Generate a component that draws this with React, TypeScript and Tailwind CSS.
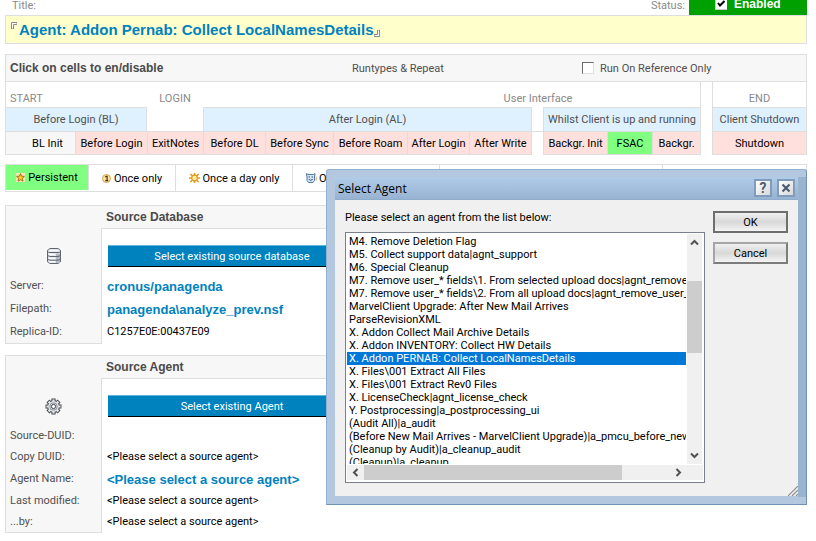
import React from "react";

const FONT = "font-['Roboto','Liberation_Sans',sans-serif]";

type Cell = { label: string; on?: boolean; plain?: boolean; end?: boolean };

const cells: (Cell | null)[] = [
  { label: "BL Init", plain: true },
  { label: "Before Login" },
  { label: "ExitNotes" },
  { label: "Before DL" },
  { label: "Before Sync" },
  { label: "Before Roam" },
  { label: "After Login" },
  { label: "After Write", end: true },
  null,
  { label: "Backgr. Init" },
  { label: "FSAC", on: true },
  { label: "Backgr.", end: true },
  null,
  { label: "Shutdown", end: true },
];

const agents = [
  "M4. Remove Deletion Flag",
  "M5. Collect support data|agnt_support",
  "M6. Special Cleanup",
  "M7. Remove user_* fields\\1. From selected upload docs|agnt_remove_user_fields_sel",
  "M7. Remove user_* fields\\2. From all upload docs|agnt_remove_user_fields_all",
  "MarvelClient Upgrade: After New Mail Arrives",
  "ParseRevisionXML",
  "X. Addon Collect Mail Archive Details",
  "X. Addon INVENTORY: Collect HW Details",
  "X. Addon PERNAB: Collect LocalNamesDetails",
  "X. Files\\001 Extract All Files",
  "X. Files\\001 Extract Rev0 Files",
  "X. LicenseCheck|agnt_license_check",
  "Y. Postprocessing|a_postprocessing_ui",
  "(Audit All)|a_audit",
  "(Before New Mail Arrives - MarvelClient Upgrade)|a_pmcu_before_new_mail",
  "(Cleanup by Audit)|a_cleanup_audit",
  "(Cleanup)|a_cleanup",
];

function StarIcon() {
  return (
    <svg width="9" height="9" viewBox="0 0 9 9" aria-hidden="true">
      <rect width="9" height="9" fill="#f6e6b4" />
      <path d="M4.5 .6 5.6 3.2 8.4 3.4 6.3 5.3 7 8.2 4.5 6.7 2 8.2 2.7 5.3 .6 3.4 3.4 3.2Z" fill="#ffcf1f" stroke="#8f5a10" strokeWidth=".8" />
    </svg>
  );
}

function CoinIcon() {
  return (
    <svg width="9" height="9" viewBox="0 0 9 9" aria-hidden="true">
      <circle cx="4.5" cy="4.5" r="4" fill="#ffe39a" stroke="#c99a4a" strokeWidth=".9" />
      <path d="M3.2 3.2 4.3 2.2H5.1V6.4M3.4 6.6H6.2" fill="none" stroke="#3a2400" strokeWidth="1.1" />
    </svg>
  );
}

function SunIcon() {
  return (
    <svg width="11" height="10" viewBox="0 0 11 10" aria-hidden="true">
      <path d="M5.5 0V10M0 5H11M1.4 1 9.6 9M9.6 1 1.4 9" stroke="#e8961c" strokeWidth="1.6" />
      <circle cx="5.5" cy="5" r="2.8" fill="#fff0a8" stroke="#e8961c" strokeWidth="1.2" />
    </svg>
  );
}

function SessionIcon() {
  return (
    <svg width="11" height="10" viewBox="0 0 11 10" aria-hidden="true">
      <path d="M.5 .5 2 1.5H7.5L9 .5V2.5H8.5V7.5L7 9.5H2.5L1 7.5V2.5H.5Z" fill="#d6e6f6" stroke="#54799e" strokeWidth="1" />
      <path d="M2.5 4H4M5.5 4H7M2.8 6C3.5 7.6 6 7.6 6.7 6" fill="none" stroke="#27507c" strokeWidth="1" />
      <path d="M10.2 3.5V7.5" stroke="#e0a060" strokeWidth="1" />
    </svg>
  );
}

function DatabaseIcon() {
  return (
    <svg width="16" height="16" viewBox="0 0 16 16" aria-hidden="true">
      <rect width="16" height="16" fill="#fff" />
      <path d="M1.5 3C1.5 1.5 3 .5 5 .5H11C13 .5 14.5 1.5 14.5 3V13C14.5 14.5 13 15.5 11 15.5H5C3 15.5 1.5 14.5 1.5 13Z" fill="#e3e7ec" stroke="#5f656d" />
      <path d="M10 5.5H14V15H10Z" fill="#b4bbc4" />
      <path d="M1.5 3.5C2 4.5 3.5 4.5 5 4.5H11C12.5 4.5 14 4.5 14.5 3.5M1.5 7C2 8.2 3.5 8.5 5 8.5H11C12.5 8.5 14 8.2 14.5 7M1.5 10.7C2 11.9 3.5 12.2 5 12.2H11C12.5 12.2 14 11.9 14.5 10.7" fill="none" stroke="#5f656d" />
      <path d="M3 6.5H9M3 10.3H9M3 13.8H9M4 2.5H12" stroke="#fff" />
    </svg>
  );
}

function GearIcon() {
  return (
    <svg width="17" height="17" viewBox="0 0 17 17" aria-hidden="true">
      <g stroke="#4a4e54" strokeWidth="4.2">
        <path d="M8.5 .5V16.5M.5 8.5H16.5M2.9 2.9 14.1 14.1M14.1 2.9 2.9 14.1" />
      </g>
      <circle cx="8.5" cy="8.5" r="6.4" fill="#4a4e54" />
      <g stroke="#e2e5e9" strokeWidth="2.2">
        <path d="M8.5 1.4V15.6M1.4 8.5H15.6M3.6 3.6 13.4 13.4M13.4 3.6 3.6 13.4" />
      </g>
      <circle cx="8.5" cy="8.5" r="5.4" fill="#dde1e5" />
      <circle cx="8.5" cy="8.5" r="3.7" fill="none" stroke="#9298a0" strokeWidth="1" />
      <circle cx="8.5" cy="8.5" r="2.1" fill="#fff" stroke="#3f444a" strokeWidth="1" />
    </svg>
  );
}

function Chevron({ d }: { d: string }) {
  return (
    <svg width="9" height="9" viewBox="0 0 9 9" aria-hidden="true">
      <path d={d} fill="none" stroke="#505050" strokeWidth="2" />
    </svg>
  );
}

type Row = { label: string; value: string; strong?: boolean; height: string };

function SourceSection({ title, action, icon, rows }: { title: string; action: string; icon: React.ReactNode; rows: Row[] }) {
  return (
    <section className="border-t border-l border-[#dedede]">
      <div className="flex h-[22px] items-center bg-[#f7f7f7] pl-[100px]">
        <h2 className="font-['Liberation_Sans',sans-serif] text-[12px] font-bold text-[#4a4a4a]">{title}</h2>
      </div>
      <div className="flex h-[46px]">
        <div className="flex w-[95px] shrink-0 items-center justify-center bg-[#f7f7f7] pt-[10px]">{icon}</div>
        <div className="grow border-t border-l border-[#dedede] pt-4 pl-[6px]">
          <button type="button" className="block h-[22px] w-[248px] border-t border-b border-t-[#5db4dc] border-b-black bg-[#0082be] text-[11px] text-white">
            {action}
          </button>
        </div>
      </div>
      <dl>
        {rows.map((r) => (
          <div key={r.label} className={`flex ${r.height}`}>
            <dt className="flex w-[96px] shrink-0 items-center border-r border-[#dedede] bg-[#f7f7f7] pl-1 text-[#505050]">{r.label}</dt>
            <dd className={r.strong ? "flex items-center pt-[2px] pl-[5px] font-['Liberation_Sans',sans-serif] text-[13px] font-bold text-[#0082be]" : "flex items-center pl-[5px] text-black"}>{r.value}</dd>
          </div>
        ))}
      </dl>
      <div className="h-px w-[96px] bg-[#dedede]" />
    </section>
  );
}

function Dialog() {
  return (
    <div
      role="dialog"
      aria-labelledby="dialog-title"
      className="absolute top-[169px] left-[326px] flex h-[336px] w-[481px] flex-col rounded-t-[3px] border border-[#92b1d2] border-r-[#7290b2] border-b-[#7290b2] bg-[#b3c7de] pt-[7px] pb-[8px] pl-[8px]"
    >
      <div className="absolute top-[7px] right-0 bottom-[7px] w-[8px] bg-[#99b4d1]" />
      <div className="mr-[8px] flex h-[23px] items-center border-b border-[#8eaccb] bg-linear-to-b from-[#b0cce9] to-[#98b3d1] pr-[3px] pl-[3px]">
        <h1 id="dialog-title" className="grow font-['Open_Sans','Noto_Sans',sans-serif] text-[12px] text-black">Select Agent</h1>
        <div className="flex gap-[5px]">
          <button type="button" aria-label="Help" className="flex size-[18px] items-center justify-center border-2 border-[#809bbb] bg-linear-to-br from-white to-[#d8d8d8] text-[14px] font-bold text-[#4d5c70]">?</button>
          <button type="button" aria-label="Close" className="flex size-[18px] items-center justify-center border-2 border-[#809bbb] bg-linear-to-br from-white to-[#d8d8d8]">
            <svg width="10" height="10" viewBox="0 0 10 10" aria-hidden="true">
              <path d="M1.5 1.5 8.5 8.5M8.5 1.5 1.5 8.5" stroke="#4d5c70" strokeWidth="2.2" />
            </svg>
          </button>
        </div>
      </div>
      <div className="relative mr-[8px] flex grow gap-[8px] bg-[#f0f0f0] pt-[11px] pr-[10px] pl-[10px]">
        <div className="flex min-w-0 grow flex-col">
          <p id="agent-label" className="mb-[7px] h-[14px] leading-[14px] text-black">Please select an agent from the list below:</p>
          <div className="flex h-[251px] flex-col border border-[#7a7f8c] bg-white p-px">
            <div className="flex h-[230px]">
              <ul role="listbox" aria-labelledby="agent-label" className="min-w-0 grow overflow-hidden pt-px">
                {agents.map((a, i) => (
                  <li
                    key={a}
                    role="option"
                    aria-selected={i === 9}
                    className={`h-[13px] pl-[2px] leading-[13px] whitespace-nowrap ${i === 9 ? "bg-[#0078d7] text-white" : "text-black"}`}
                  >
                    {a}
                  </li>
                ))}
              </ul>
              <div className="ml-px flex w-[15px] shrink-0 flex-col items-center bg-[#f0f0f0]">
                <div className="flex h-[47px] pt-[4px]"><Chevron d="M1 6.5 4.5 3 8 6.5" /></div>
                <div className="h-[72px] w-full bg-[#cdcdcd]" />
                <div className="mt-auto pb-[4px]"><Chevron d="M1 2.5 4.5 6 8 2.5" /></div>
              </div>
              <div className="w-px" />
            </div>
            <div className="mt-px flex h-[15px] items-center bg-[#f0f0f0]">
              <div className="flex w-[17px] justify-center"><Chevron d="M6.5 1 3 4.5 6.5 8" /></div>
              <div className="h-full w-[258px] bg-[#cdcdcd]" />
              <div className="ml-auto pr-[20px]"><Chevron d="M2.5 1 6 4.5 2.5 8" /></div>
            </div>
          </div>
        </div>
        <div className="flex w-[75px] shrink-0 flex-col gap-[9px]">
          <button type="button" className="h-[22px] border-2 border-[#6e6e6e] bg-linear-to-b from-[#f0f0f0] via-[#d8d8d8] to-[#f4f4f4] text-black">OK</button>
          <button type="button" className="h-[22px] border-2 border-t-[#a5a5a5] border-r-[#7c7c7c] border-b-[#7c7c7c] border-l-[#a5a5a5] bg-linear-to-b from-[#f0f0f0] via-[#d8d8d8] to-[#f4f4f4] text-black">Cancel</button>
        </div>
        <svg className="absolute right-0 bottom-0" width="10" height="10" viewBox="0 0 10 10" aria-hidden="true">
          <path d="M0 10 10 0M4 10 10 4M8 10 10 8" stroke="#8c8c8c" strokeWidth="1.2" />
        </svg>
      </div>
    </div>
  );
}

export default function App() {
  const line = "border-[#dedede]";
  return (
    <main className={`relative min-h-screen overflow-hidden bg-white pr-[9px] pl-[5px] text-[11px] leading-[13px] text-black ${FONT}`}>
      <header className="flex h-[15px] items-start">
        <span className="grow pl-[7px] leading-[11px] text-[#8a8a8a]">Title:</span>
        <span className="pr-[4px] leading-[11px] text-[#8a8a8a]">Status:</span>
        <label className="flex h-full w-[118px] items-start gap-[7px] bg-[#00a000] pl-[26px] font-['Liberation_Sans',sans-serif] text-[12px] leading-[9px] font-bold text-white">
          <span className="grid">
            <input type="checkbox" defaultChecked className="peer col-start-1 row-start-1 h-[10px] w-[12px] appearance-none border-b border-l border-[#c8c8c8] bg-white" />
            <svg className="pointer-events-none invisible col-start-1 row-start-1 peer-checked:visible" width="12" height="10" viewBox="0 0 12 10" aria-hidden="true">
              <path d="M3 3 5 5.5 9.5 1" fill="none" stroke="#000" strokeWidth="2" />
            </svg>
          </span>
          Enabled
        </label>
      </header>

      <div className={`flex h-[29px] items-center border bg-[#ffffcc] pl-[5px] ${line}`}>
        <svg className="mr-[2px] mb-2" width="6" height="7" viewBox="0 0 6 7" aria-hidden="true">
          <path d="M.5 7V.5H6V2.5H2.5V7Z" fill="#fff" stroke="#8a8a8a" />
        </svg>
        <input
          type="text"
          aria-label="Title"
          defaultValue="Agent: Addon Pernab: Collect LocalNamesDetails"
          className="field-sizing-content bg-transparent font-['Liberation_Sans',sans-serif] text-[15px] font-bold text-[#0082be] outline-none"
        />
        <svg className="mt-2" width="6" height="7" viewBox="0 0 6 7" aria-hidden="true">
          <path d="M5.5 0V6.5H0V4.5H3.5V0Z" fill="#fff" stroke="#8a8a8a" />
        </svg>
      </div>

      <div className={`mt-[10px] flex h-[28px] items-center border bg-[#f7f7f7] ${line}`}>
        <h2 className="w-[346px] pl-1 font-['Liberation_Sans',sans-serif] text-[12px] font-bold text-[#4a4a4a]">Click on cells to en/disable</h2>
        <span className="w-[230px] text-[#505050]">Runtypes &amp; Repeat</span>
        <label className="flex items-center gap-[6px] text-[#505050]">
          <input type="checkbox" className="size-[12px] appearance-none border border-t-[#6a6a6a] border-r-[#dcdcdc] border-b-[#dcdcdc] border-l-[#6a6a6a] bg-white" />
          Run On Reference Only
        </label>
      </div>

      <table className="w-full table-fixed border-separate border-spacing-0 text-center">
        <colgroup>
          <col className="w-[70px]" />
          <col className="w-[72px]" />
          <col className="w-[56px]" />
          <col className="w-[62px]" />
          <col className="w-[68px]" />
          <col className="w-[74px]" />
          <col className="w-[62px]" />
          <col className="w-[63px]" />
          <col className="w-[11px]" />
          <col className="w-[64px]" />
          <col className="w-[45px]" />
          <col className="w-[49px]" />
          <col className="w-[11px]" />
          <col className="w-[95px]" />
        </colgroup>
        <tbody>
          <tr className="h-[25px] text-[#8a8a8a]">
            <td colSpan={2} className={`border-l pt-2 pl-1 text-left ${line}`}>START</td>
            <td className="pt-2">LOGIN</td>
            <td colSpan={4} />
            <td colSpan={3} className="pt-2">User Interface</td>
            <td colSpan={2} className={`border-r ${line}`} />
            <td />
            <td className={`border-x pt-2 ${line}`}>END</td>
          </tr>
          <tr className="h-[24px] text-[#505050]">
            <td colSpan={2} className={`border border-b-0 bg-[#dff0ff] ${line}`}>Before Login (BL)</td>
            <td />
            <td colSpan={5} className={`border border-b-0 bg-[#dff0ff] ${line}`}>After Login (AL)</td>
            <td />
            <td colSpan={3} className={`border border-b-0 bg-[#dff0ff] ${line}`}>Whilst Client is up and running</td>
            <td />
            <td className={`border border-b-0 bg-[#dff0ff] ${line}`}>Client Shutdown</td>
          </tr>
          <tr className="h-[24px]">
            {cells.map((c, i) =>
              c ? (
                <td key={i} className={`border-y border-l p-0 ${line} ${c.end ? "border-r" : ""} ${c.on ? "bg-[#80ff80]" : c.plain ? "bg-[#f7f7f7]" : "bg-[#ffe0dc]"}`}>
                  <button type="button" className={`h-[22px] w-full whitespace-nowrap ${c.plain ? "pl-[14px]" : ""}`}>{c.label}</button>
                </td>
              ) : (
                <td key={i} className={i === 8 ? `border-t ${line}` : ""} />
              ),
            )}
          </tr>
        </tbody>
      </table>

      <div className={`mt-[9px] flex h-[28px] border ${line}`}>
        <button type="button" className={`mb-px flex w-[83px] items-center justify-center gap-[3px] border-r bg-[#80ff80] ${line}`}><StarIcon />Persistent</button>
        <button type="button" className={`flex w-[87px] items-center justify-center gap-[3px] border-r ${line}`}><CoinIcon />Once only</button>
        <button type="button" className={`flex w-[117px] items-center justify-center gap-[3px] border-r ${line}`}><SunIcon />Once a day only</button>
        <button type="button" className={`flex w-[147px] items-center gap-[2px] border-r pl-[13px] whitespace-nowrap ${line}`}><SessionIcon />Once per session</button>
        <div className={`w-[223px] border-r ${line}`} />
      </div>

      <div className="mt-[13px] flex flex-col gap-[11px]">
        <SourceSection
          title="Source Database"
          action="Select existing source database"
          icon={<DatabaseIcon />}
          rows={[
            { label: "Server:", value: "cronus/panagenda", strong: true, height: "h-[23px]" },
            { label: "Filepath:", value: "panagenda\\analyze_prev.nsf", strong: true, height: "h-[23px]" },
            { label: "Replica-ID:", value: "C1257E0E:00437E09", height: "h-[23px]" },
          ]}
        />
        <SourceSection
          title="Source Agent"
          action="Select existing Agent"
          icon={<GearIcon />}
          rows={[
            { label: "Source-DUID:", value: "", height: "h-[22px]" },
            { label: "Copy DUID:", value: "<Please select a source agent>", height: "h-[21px]" },
            { label: "Agent Name:", value: "<Please select a source agent>", strong: true, height: "h-[22px]" },
            { label: "Last modified:", value: "<Please select a source agent>", height: "h-[22px]" },
            { label: "...by:", value: "<Please select a source agent>", height: "h-[21px]" },
          ]}
        />
      </div>

      <Dialog />
    </main>
  );
}
